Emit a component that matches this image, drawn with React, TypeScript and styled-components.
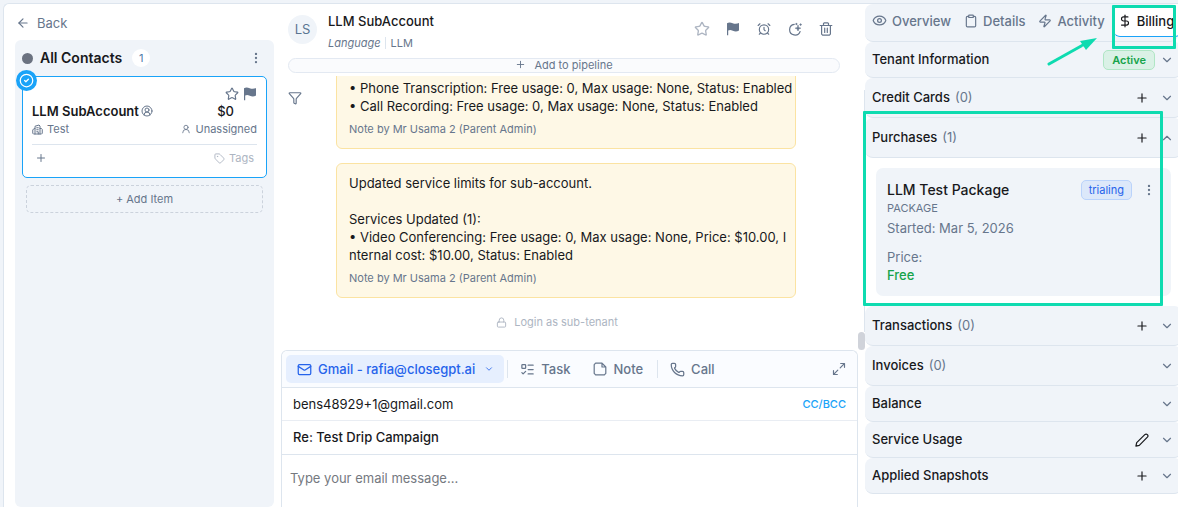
import React from 'react';
import styled, { createGlobalStyle } from 'styled-components';
import {
  AlarmClock, ArrowLeft, ChevronDown, ChevronUp, CircleCheck, CircleUserRound, Clipboard,
  DollarSign, EllipsisVertical, Eye, Funnel, ListTodo, Lock, Mail, Phone, Plus,
  Star, Tag, UserRound, Zap,
} from 'lucide-react';

const c = {
  ink: '#18191c',
  muted: '#67768c',
  faint: '#adb5c2',
  panel: '#f0f4f9',
  line: '#dde5ee',
  azure: '#1aa3f8',
  blue: '#2563eb',
  green: '#16a34a',
  mark: '#0edbb0',
};

const GlobalStyle = createGlobalStyle`
  *, *::before, *::after { box-sizing: border-box; }
  body { margin: 0; background: ${c.panel}; color: ${c.ink}; font: 13px/18px Inter, sans-serif; }
  button, input, textarea { font: inherit; color: inherit; }
  h1, h2, h3, p { margin: 0; font: inherit; }
  svg { flex: none; display: block; }
`;

const Page = styled.div`
  height: 100vh;
  padding: 3px 0 0 3px;
  overflow: hidden;
`;

const Shell = styled.div`
  display: flex;
  height: 100%;
  background: #fff;
  border: 1px solid ${c.line};
  border-width: 1px 0 0 1px;
  border-radius: 6px 0 0 0;
`;

const PlainButton = styled.button`
  display: inline-flex;
  align-items: center;
  justify-content: center;
  padding: 0;
  border: 0;
  background: none;
  color: ${c.muted};
`;

/* ---------- left column ---------- */

const Sidebar = styled.aside`
  flex: none;
  display: flex;
  flex-direction: column;
  width: 270px;
  padding: 10px 0 0 11px;
`;

const BackButton = styled(PlainButton)`
  align-self: flex-start;
  gap: 7px;
  padding-left: 1px;
  margin-bottom: 8px;
`;

const ListPanel = styled.section`
  flex: 1;
  padding: 8px 7px;
  border-radius: 6px;
  background: ${c.panel};
`;

const ListHeader = styled.header`
  display: flex;
  align-items: center;
  gap: 7px;
  height: 20px;
  margin-bottom: 8px;
`;

const Dot = styled.span`
  width: 11px;
  height: 11px;
  border-radius: 50%;
  background: #6b7280;
`;

const ListTitle = styled.h2`
  font-size: 14px;
  font-weight: 600;
`;

const Count = styled.span`
  width: 18px;
  margin-left: 3px;
  border-radius: 9px;
  background: #fff;
  color: #4f7ba8;
  font-size: 11px;
  text-align: center;
`;

const MenuButton = styled(PlainButton)`
  width: 22px;
  height: 20px;
  margin-left: auto;
`;

const ContactCard = styled.article`
  position: relative;
  display: flex;
  flex-direction: column;
  height: 102px;
  padding: 8px 9px;
  border: 1px solid ${c.azure};
  border-radius: 5px;
  background: #fff;
`;

const SelectedBadge = styled.span`
  position: absolute;
  top: -7px;
  left: -7px;
  display: grid;
  place-items: center;
  width: 21px;
  height: 21px;
  border-radius: 50%;
  background: ${c.azure};
  color: #fff;
`;

const CardRow = styled.div<{ $top?: boolean }>`
  display: flex;
  align-items: center;
  justify-content: ${p => (p.$top ? 'flex-end' : 'space-between')};
  gap: 4px;
  height: ${p => (p.$top ? 17 : 18)}px;
`;

const Name = styled.h3`
  display: flex;
  align-items: center;
  gap: 2px;
  font-weight: 600;
  svg { color: ${c.muted}; }
`;

const Amount = styled.span`
  padding-right: 23px;
  font-weight: 500;
`;

const Meta = styled.span<{ $faint?: boolean }>`
  display: flex;
  align-items: center;
  gap: 4px;
  color: ${p => (p.$faint ? c.faint : c.muted)};
  font-size: 11px;
`;

const CardFooter = styled.div`
  display: flex;
  align-items: center;
  justify-content: space-between;
  flex: 1;
  margin-top: 6px;
  padding: 2px 3px 0;
  border-top: 1px solid ${c.line};
`;

const AddItem = styled.button`
  display: block;
  width: calc(100% - 8px);
  height: 28px;
  margin: 7px 4px;
  border: 1px dashed #cbd2dc;
  border-radius: 5px;
  background: none;
  color: ${c.muted};
  font-size: 11px;
`;

/* ---------- middle column ---------- */

const Main = styled.main`
  flex: 1;
  display: flex;
  flex-direction: column;
  min-width: 0;
  padding-left: 7px;
`;

const ContactHeader = styled.header`
  display: flex;
  gap: 11px;
  height: 54px;
  padding: 8px 20px 0 7px;
`;

const Avatar = styled.span`
  flex: none;
  width: 29px;
  height: 29px;
  margin-top: 3px;
  border-radius: 50%;
  background: ${c.panel};
  color: #5a7592;
  line-height: 29px;
  text-align: center;
`;

const Title = styled.h1`
  font-weight: 500;
`;

const SubTitle = styled.p`
  display: flex;
  gap: 5px;
  margin-top: 4px;
  color: ${c.muted};
  font-size: 11px;
  line-height: 18px;
`;

const Language = styled.em`
  padding-right: 4px;
  border-right: 1px solid ${c.line};
  line-height: 12px;
  margin: 3px 0;
`;

const HeaderActions = styled.div`
  display: flex;
  gap: 7px;
  height: 24px;
  margin: 5px 0 0 auto;
`;

const IconButton = styled(PlainButton)<{ $faint?: boolean }>`
  width: 24px;
  height: 24px;
  color: ${p => (p.$faint ? c.faint : c.muted)};
`;

const PipelineButton = styled.button`
  display: flex;
  align-items: center;
  justify-content: center;
  gap: 8px;
  flex: none;
  height: 15px;
  margin: 0 18px 3px 7px;
  padding: 0 0 2px;
  border: 1px solid #e3e9f2;
  border-radius: 8px;
  background: #fafbfd;
  color: ${c.muted};
  font-size: 11px;
  line-height: 12px;
`;

const Feed = styled.div`
  flex: 1;
  display: flex;
  min-height: 0;
  padding: 0 62px 0 7px;
  overflow: hidden;
`;

const FilterButton = styled(PlainButton)`
  flex: none;
  width: 14px;
  height: 14px;
  margin: 15px 34px 0 0;
`;

const Messages = styled.div`
  flex: 1;
  display: flex;
  flex-direction: column;
  justify-content: flex-end;
  gap: 14px;
  min-width: 0;
`;

const Note = styled.article`
  flex: none;
  padding: 10px 12px;
  border: 1px solid #fbe3a2;
  border-radius: 6px;
  background: #fef8e6;
  white-space: pre;
`;

const NoteAuthor = styled.p`
  margin-top: 5px;
  color: ${c.muted};
  font-size: 11px;
`;

const LoginLink = styled(PlainButton)`
  gap: 7px;
  height: 18px;
  margin: 1px 18px 19px 0;
  color: ${c.faint};
  font-size: 11px;
`;

const Composer = styled.form`
  flex: none;
  border: 1px solid ${c.line};
  border-bottom: 0;
  border-radius: 6px 6px 0 0;
`;

const Toolbar = styled.div`
  display: flex;
  align-items: center;
  height: 37px;
  padding: 0 6px 0 4px;
  border-bottom: 1px solid ${c.line};
  border-radius: 6px 6px 0 0;
  background: #fafcff;
`;

const Channel = styled(PlainButton)<{ $active?: boolean }>`
  gap: 6px;
  height: 28px;
  padding: ${p => (p.$active ? '0 10px 0 11px' : '0 11px 0 12px')};
  border-radius: 5px;
  background: ${p => (p.$active ? '#e6effe' : 'none')};
  color: ${p => (p.$active ? c.blue : c.muted)};
  font-weight: 500;
  svg:last-child:not(:first-child) { margin-left: 3px; }
`;

const Divider = styled.span`
  width: 1px;
  height: 18px;
  margin-left: 3px;
  background: ${c.line};
`;

const Expand = styled(IconButton)`
  margin-left: auto;
`;

const Field = styled.label<{ $strong?: boolean }>`
  display: flex;
  align-items: center;
  height: ${p => (p.$strong ? 34 : 33)}px;
  padding: 0 11px ${p => (p.$strong ? 2 : 0)}px;
  border-bottom: 1px solid ${p => (p.$strong ? c.line : '#e9edf3')};
  font-weight: ${p => (p.$strong ? 500 : 400)};
`;

const FieldInput = styled.input`
  flex: 1;
  min-width: 0;
  padding: 0;
  border: 0;
  outline: 0;
  background: none;
`;

const CcButton = styled(PlainButton)`
  color: ${c.azure};
  font-size: 11px;
  font-weight: 500;
`;

const Body = styled.textarea`
  display: block;
  width: 100%;
  height: 52px;
  padding: 14px 8px;
  border: 0;
  outline: 0;
  resize: none;
  background: none;
  &::placeholder { color: #75797f; opacity: 1; }
`;

const Gutter = styled.div`
  flex: none;
  display: flex;
  flex-direction: column;
  width: 7px;
  padding: 86px 0 157px;
`;

const Track = styled.span`
  flex: 1;
  border-right: 1px solid ${c.line};
`;

const Thumb = styled.span`
  height: 18px;
  border-radius: 4px;
  background: #d0d3da;
`;

/* ---------- right column ---------- */

const Details = styled.aside`
  flex: none;
  position: relative;
  width: 313px;
`;

const Tabs = styled.nav`
  display: flex;
  align-items: center;
  height: 38px;
  padding: 0 0 3px 7px;
  border-bottom: 1px solid ${c.line};
  border-radius: 8px;
  background: ${c.panel};
`;

const Tab = styled(PlainButton)<{ $active?: boolean }>`
  flex: none;
  gap: 5px;
  height: 31px;
  padding: ${p => (p.$active ? '0 7px 0 4px' : '0 13px 0 0')};
  margin-left: ${p => (p.$active ? -4 : 0)}px;
  border-bottom: 1px solid ${p => (p.$active ? c.azure : 'transparent')};
  border-radius: 6px;
  background: ${p => (p.$active ? '#fff' : 'none')};
  color: ${p => (p.$active ? c.ink : c.muted)};
  font-weight: 500;
`;

const Section = styled.header<{ $tall?: boolean }>`
  display: flex;
  align-items: center;
  gap: 5px;
  height: ${p => (p.$tall ? 40 : 36)}px;
  margin-right: -4px;
  padding: 0 8px 0 7px;
  border-bottom: 1px solid ${c.line};
  border-radius: 8px;
  background: ${c.panel};
`;

const SectionTitle = styled.h2`
  padding-bottom: 2px;
  font-weight: 500;
`;

const SectionCount = styled.span`
  padding-bottom: 2px;
  color: ${c.muted};
`;

const SectionActions = styled.div`
  display: flex;
  align-items: center;
  gap: 5px;
  margin-left: auto;
`;

const Action = styled(PlainButton)<{ $dark?: boolean }>`
  width: 14px;
  height: 18px;
  margin-right: ${p => (p.$dark ? 6 : 0)}px;
  color: ${p => (p.$dark ? c.ink : c.muted)};
`;

const Pill = styled.span<{ $blue?: boolean }>`
  padding: 0 ${p => (p.$blue ? 7 : 8)}px;
  border: 1px solid ${p => (p.$blue ? '#bad3fb' : '#b0e6c5')};
  border-radius: 5px;
  background: ${p => (p.$blue ? '#dce8fa' : '#daf1e6')};
  color: ${p => (p.$blue ? c.blue : c.green)};
  font-size: 11px;
  font-weight: ${p => (p.$blue ? 400 : 600)};
`;

const PackageCard = styled.article`
  height: 128px;
  margin: 10px 7px 10px 11px;
  padding: 12px 15px 12px 11px;
  border-radius: 7px;
  background: ${c.panel};
  color: ${c.muted};
`;

const PackageHead = styled.div`
  display: flex;
  align-items: center;
  height: 20px;
`;

const PackageTitle = styled.h3`
  margin-right: auto;
  color: ${c.ink};
  font-size: 14px;
  font-weight: 500;
`;

const PackageMenu = styled(PlainButton)`
  width: 14px;
  margin-left: 10px;
`;

const Kind = styled.p`
  font-size: 11px;
  line-height: 16px;
`;

const Started = styled.p`
  margin: 3px 0 11px;
`;

const Price = styled.p`
  color: ${c.green};
  font-weight: 500;
`;

const Highlight = styled.span<{ $tab?: boolean }>`
  position: absolute;
  top: ${p => (p.$tab ? 1 : 107)}px;
  right: ${p => (p.$tab ? 2 : 15)}px;
  width: ${p => (p.$tab ? 64 : 300)}px;
  height: ${p => (p.$tab ? 44 : 195)}px;
  border: 3px solid ${c.mark};
  border-radius: 1px;
  pointer-events: none;
`;

const Pointer = styled.svg`
  position: absolute;
  top: 33px;
  right: 81px;
`;

const FlagIcon = () => (
  <svg width="14" height="14" viewBox="0 0 14 14" fill="currentColor">
    <path d="M1 1.2C2.6.2 4.6.3 6.700 1.200S11 2 13 1v7.600c-2 1.200-4.200 1.100-6.200.2S3.600 7.900 2.200 8.600V13.300H1z" />
  </svg>
);

const BuildingIcon = () => (
  <svg width="11" height="11" viewBox="0 0 22 22" fill="none" stroke="currentColor" strokeWidth="2" strokeLinejoin="round" strokeLinecap="round">
    <path d="M6 20V4.500L14 2l2 2v16M6 9 3.500 9.500 1.500 12v6.500L3 20h16l1.500-1.500V11L19 9h-3M9.500 7.500h3M9.500 11.500h3M9.500 15.500h3V20" />
  </svg>
);

const SnoozeIcon = () => (
  <svg width="14" height="14" viewBox="0 0 14 14" fill="none" stroke="currentColor" strokeWidth="1.200" strokeLinecap="round">
    <path d="M6.300 2.300a5.400 5.400 0 1 0 5.800 7.200" />
    <path d="M10 3.400c.4 1.800 1 2.400 2.800 2.800-1.800.4-2.400 1-2.800 2.800-.4-1.800-1-2.400-2.800-2.800 1.800-.4 2.400-1 2.800-2.800z" fill="currentColor" strokeWidth=".6" />
    <path d="M8.400 1.300v1.400M7.700 2h1.400M12.600 1.800v1.600M11.800 2.600h1.600" strokeWidth=".9" />
  </svg>
);

const TrashIcon = () => (
  <svg width="14" height="14" viewBox="0 0 14 14" fill="none" stroke="currentColor" strokeWidth="1.200" strokeLinecap="round" strokeLinejoin="round">
    <path d="M1.200 3.500h11.600M4.500 3.300V1.500l.7-.7h3.600l.7.7v1.800M2.600 3.700v8.400l1 1h6.800l1-1V3.700M5.700 6.200v4.200M8.300 6.200v4.200" />
  </svg>
);

const NoteIcon = () => (
  <svg width="14" height="14" viewBox="0 0 14 14" fill="none" stroke="currentColor" strokeWidth="1.200" strokeLinejoin="round">
    <path d="M9 1.200H2.600L1.200 2.600v8.800l1.400 1.400h8.800l1.400-1.400V5L9 1.200V5h3.800" />
  </svg>
);

const ExpandIcon = () => (
  <svg width="14" height="14" viewBox="0 0 14 14" fill="none" stroke="currentColor" strokeWidth="1.200" strokeLinecap="round" strokeLinejoin="round">
    <path d="M8.700 1.500h3.800v3.800M12.300 1.700 8.200 5.800M5.300 12.500H1.500V8.700M1.700 12.300l4.100-4.100" />
  </svg>
);

const PencilIcon = () => (
  <svg width="14" height="14" viewBox="0 0 14 14" fill="none" stroke="currentColor" strokeWidth="1.200" strokeLinejoin="round">
    <path d="M.9 13.100l.8-3.400 8.100-8.100c1.800-1.600 4.200.8 2.600 2.600l-8.100 8.100z" />
  </svg>
);

type SectionProps = {
  title: string;
  count?: number;
  action?: 'add' | 'edit';
  open?: boolean;
  badge?: string;
};

const SectionRow = ({ title, count, action, open, badge }: SectionProps) => (
  <Section $tall={count !== undefined}>
    <SectionTitle>{title}</SectionTitle>
    {count !== undefined && <SectionCount>({count})</SectionCount>}
    <SectionActions>
      {badge && <Pill>{badge}</Pill>}
      {action && (
        <Action $dark aria-label={`${action} ${title}`}>
          {action === 'add' ? <Plus size={14} /> : <PencilIcon />}
        </Action>
      )}
      <Action aria-label={`Toggle ${title}`}>
        {open ? <ChevronUp size={14} /> : <ChevronDown size={14} />}
      </Action>
    </SectionActions>
  </Section>
);

export default function App() {
  return (
    <Page>
      <GlobalStyle />
      <Shell>
        <Sidebar>
          <BackButton><ArrowLeft size={14} />Back</BackButton>
          <ListPanel>
            <ListHeader>
              <Dot />
              <ListTitle>All Contacts</ListTitle>
              <Count>1</Count>
              <MenuButton aria-label="List menu"><EllipsisVertical size={14} /></MenuButton>
            </ListHeader>
            <ContactCard>
              <SelectedBadge><CircleCheck size={15} /></SelectedBadge>
              <CardRow $top>
                <PlainButton aria-label="Favourite"><Star size={14} /></PlainButton>
                <PlainButton aria-label="Flag"><FlagIcon /></PlainButton>
              </CardRow>
              <CardRow>
                <Name>LLM SubAccount<CircleUserRound size={12} /></Name>
                <Amount>$0</Amount>
              </CardRow>
              <CardRow>
                <Meta><BuildingIcon />Test</Meta>
                <Meta><UserRound size={10} />Unassigned</Meta>
              </CardRow>
              <CardFooter>
                <PlainButton aria-label="Add"><Plus size={12} /></PlainButton>
                <Meta $faint><Tag size={11} />Tags</Meta>
              </CardFooter>
            </ContactCard>
            <AddItem>+ Add Item</AddItem>
          </ListPanel>
        </Sidebar>

        <Main>
          <ContactHeader>
            <Avatar>LS</Avatar>
            <div>
              <Title>LLM SubAccount</Title>
              <SubTitle><Language>Language</Language>LLM</SubTitle>
            </div>
            <HeaderActions>
              <IconButton $faint aria-label="Favourite"><Star size={16} /></IconButton>
              <IconButton aria-label="Flag"><FlagIcon /></IconButton>
              <IconButton aria-label="Reminder"><AlarmClock size={14} /></IconButton>
              <IconButton aria-label="Snooze"><SnoozeIcon /></IconButton>
              <IconButton aria-label="Delete"><TrashIcon /></IconButton>
            </HeaderActions>
          </ContactHeader>
          <PipelineButton><Plus size={11} />Add to pipeline</PipelineButton>
          <Feed>
            <FilterButton aria-label="Filter"><Funnel size={14} /></FilterButton>
            <Messages>
              <Note>
                <p>{'• Phone Transcription: Free usage: 0, Max usage: None, Status: Enabled\n• Call Recording: Free usage: 0, Max usage: None, Status: Enabled'}</p>
                <NoteAuthor>Note by Mr Usama 2 (Parent Admin)</NoteAuthor>
              </Note>
              <Note>
                <p>{'Updated service limits for sub-account.\n\nServices Updated (1):\n• Video Conferencing: Free usage: 0, Max usage: None, Price: $10.00, I\nnternal cost: $10.00, Status: Enabled'}</p>
                <NoteAuthor>Note by Mr Usama 2 (Parent Admin)</NoteAuthor>
              </Note>
              <LoginLink><Lock size={11} />Login as sub-tenant</LoginLink>
            </Messages>
          </Feed>
          <Composer>
            <Toolbar>
              <Channel type="button" $active><Mail size={15} />Gmail - rafia@closegpt.ai<ChevronDown size={10} /></Channel>
              <Divider />
              <Channel type="button"><ListTodo size={15} />Task</Channel>
              <Channel type="button"><NoteIcon />Note</Channel>
              <Divider />
              <Channel type="button"><Phone size={15} />Call</Channel>
              <Expand type="button" aria-label="Expand"><ExpandIcon /></Expand>
            </Toolbar>
            <Field>
              <FieldInput aria-label="To" defaultValue="bens48929+1@gmail.com" />
              <CcButton type="button">CC/BCC</CcButton>
            </Field>
            <Field $strong>
              <FieldInput aria-label="Subject" defaultValue="Re: Test Drip Campaign" />
            </Field>
            <Body aria-label="Message" placeholder="Type your email message..." />
          </Composer>
        </Main>

        <Gutter><Track /><Thumb /></Gutter>

        <Details>
          <Tabs>
            <Tab><Eye size={15} />Overview</Tab>
            <Tab><Clipboard size={14} />Details</Tab>
            <Tab><Zap size={14} />Activity</Tab>
            <Tab $active><DollarSign size={14} />Billing</Tab>
          </Tabs>
          <SectionRow title="Tenant Information" badge="Active" />
          <SectionRow title="Credit Cards" count={0} action="add" />
          <SectionRow title="Purchases" count={1} action="add" open />
          <PackageCard>
            <PackageHead>
              <PackageTitle>LLM Test Package</PackageTitle>
              <Pill $blue>trialing</Pill>
              <PackageMenu aria-label="Package menu"><EllipsisVertical size={14} /></PackageMenu>
            </PackageHead>
            <Kind>PACKAGE</Kind>
            <Started>Started: Mar 5, 2026</Started>
            <p>Price:</p>
            <Price>Free</Price>
          </PackageCard>
          <SectionRow title="Transactions" count={0} action="add" />
          <SectionRow title="Invoices" count={0} />
          <SectionRow title="Balance" />
          <SectionRow title="Service Usage" action="edit" />
          <SectionRow title="Applied Snapshots" action="add" />
          <Highlight $tab />
          <Highlight />
          <Pointer width="50" height="30" viewBox="0 0 50 30" fill={c.mark}>
            <path d="M2 27 36 8" stroke={c.mark} strokeWidth="3" strokeLinecap="round" />
            <path d="M50 1 33 4l6 9z" />
          </Pointer>
        </Details>
      </Shell>
    </Page>
  );
}
